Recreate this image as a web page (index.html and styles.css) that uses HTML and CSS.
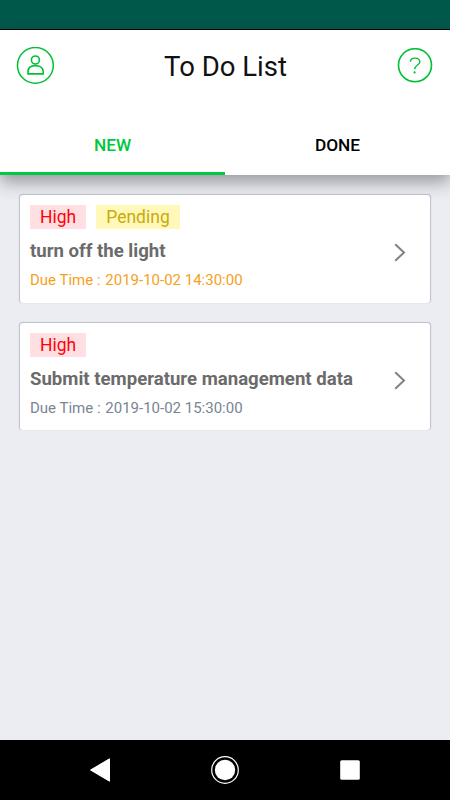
FILE: index.html
```
<!DOCTYPE html>
<html lang="en">
<head>
<meta charset="utf-8">
<title>To Do List</title>
<link rel="stylesheet" href="styles.css">
</head>
<body>
<div class="status"></div>
<header class="header">
  <div class="bar">
    <svg class="profile" width="38" height="38" viewBox="0 0 38 38" fill="none" stroke="#00c135">
      <circle cx="19.4" cy="18.4" r="17.9" stroke-width="1.5"/>
      <circle cx="19.4" cy="13" r="4" stroke-width="1.6"/>
      <path d="M12 26.9V24.7C12 20.8 14.9 18.6 19.4 18.6S27.2 20.8 27.2 24.7V26.9Z" stroke-width="1.6"/>
    </svg>
    <h1 class="heading">To Do List</h1>
    <svg class="help" width="36" height="36" viewBox="0 0 36 36" fill="none" stroke="#00c135">
      <circle cx="18" cy="17.2" r="16.5" stroke-width="1.6"/>
      <path d="M13.4 13.8C13.4 11.3 15.4 10.1 18.1 10.1S22.8 11.5 22.8 13.9C22.8 17.1 17.7 17 17.7 21.2" stroke-width="1.4"/>
      <circle cx="17.6" cy="24.4" r="1.1" fill="#00c135" stroke="none"/>
    </svg>
  </div>
  <nav class="tabs">
    <div class="tab active"><span>NEW</span></div>
    <div class="tab"><span>DONE</span></div>
  </nav>
</header>
<main class="list">
  <article class="card">
    <div class="info">
      <div class="tags"><span class="tag high">High</span><span class="tag pending">Pending</span></div>
      <h2 class="name">turn off the light</h2>
      <p class="due late">Due Time : <span class="date">2019-10-02 14:30:00</span></p>
    </div>
    <svg class="chevron" width="14" height="20" viewBox="0 0 14 20" fill="none" stroke="#828282" stroke-width="2"><path d="M3.2 1.2L12 9.5L3.2 17.8"/></svg>
  </article>
  <article class="card">
    <div class="info">
      <div class="tags"><span class="tag high">High</span></div>
      <h2 class="name">Submit temperature management data</h2>
      <p class="due">Due Time : <span class="date">2019-10-02 15:30:00</span></p>
    </div>
    <svg class="chevron" width="14" height="20" viewBox="0 0 14 20" fill="none" stroke="#828282" stroke-width="2"><path d="M3.2 1.2L12 9.5L3.2 17.8"/></svg>
  </article>
</main>
<footer class="navbar">
  <svg width="30" height="30" viewBox="0 0 30 30" fill="#fff" stroke="#fff" stroke-linejoin="round"><path d="M5.5 15L24.5 3.8V26.2Z"/></svg>
  <svg width="30" height="30" viewBox="0 0 30 30"><circle cx="15" cy="15" r="13.3" fill="none" stroke="#fff" stroke-width="1.2"/><circle cx="15" cy="15" r="10.2" fill="#fff"/></svg>
  <svg width="30" height="30" viewBox="0 0 30 30"><rect x="5.2" y="5.2" width="19.6" height="19.6" rx="1.5" fill="#fff"/></svg>
</footer>
</body>
</html>
```
FILE: styles.css
```
* { box-sizing: border-box; }
body {
  margin: 0;
  height: 800px;
  display: flex;
  flex-direction: column;
  background: #ebedf2;
  font-family: Roboto, sans-serif;
  overflow: hidden;
}
h1, h2, p { margin: 0; }
svg { display: block; flex: none; }
.status { height: 30px; background: #00584b; border-bottom: 1px solid #000; }
.header {
  height: 145px;
  background: #fff;
  display: flex;
  flex-direction: column;
  justify-content: space-between;
  box-shadow: 0 7px 16px rgba(50, 50, 60, .46);
}
.bar {
  height: 72px;
  padding: 0 17px 0 16px;
  display: flex;
  align-items: center;
  justify-content: space-between;
}
.heading { padding-top: 2px; font-size: 27.5px; font-weight: 400; line-height: 32px; color: #111; }
.tabs { display: flex; height: 60px; }
.tab {
  flex: 1;
  display: flex;
  justify-content: center;
  padding-top: 20px;
  font-size: 17.3px;
  line-height: 20px;
  font-weight: 500;
  color: #000;
}
.active { color: #00c83c; border-bottom: 3px solid #00cb40; }
.list { flex: 1; padding: 20px 20px 0; display: flex; flex-direction: column; gap: 20px; }
.card {
  height: 107.5px;
  padding: 10px 24px 0 10px;
  display: flex;
  justify-content: space-between;
  background: #fff;
  border-radius: 3px;
  box-shadow: 0 -.5px 1px .5px rgba(130, 133, 150, .45);
}
.tags { display: flex; gap: 10px; }
.tag { height: 24px; line-height: 25px; padding: 0 10px; font-size: 17.5px; }
.high { background: #ffdfe2; color: #ff0008; }
.pending { background: #fff8b8; color: #c9aa0c; }
.name { margin-top: 11px; font-size: 18.6px; line-height: 22px; font-weight: 700; color: #6b6b6b; }
.due { margin-top: 9px; font-size: 15px; line-height: 18px; color: #788592; }
.date { margin-left: 1px; }
.late { color: #f5a11c; }
.chevron { margin-top: 38px; }
.navbar { height: 60px; background: #000; display: flex; justify-content: space-between; padding: 15px 85px; }
```
